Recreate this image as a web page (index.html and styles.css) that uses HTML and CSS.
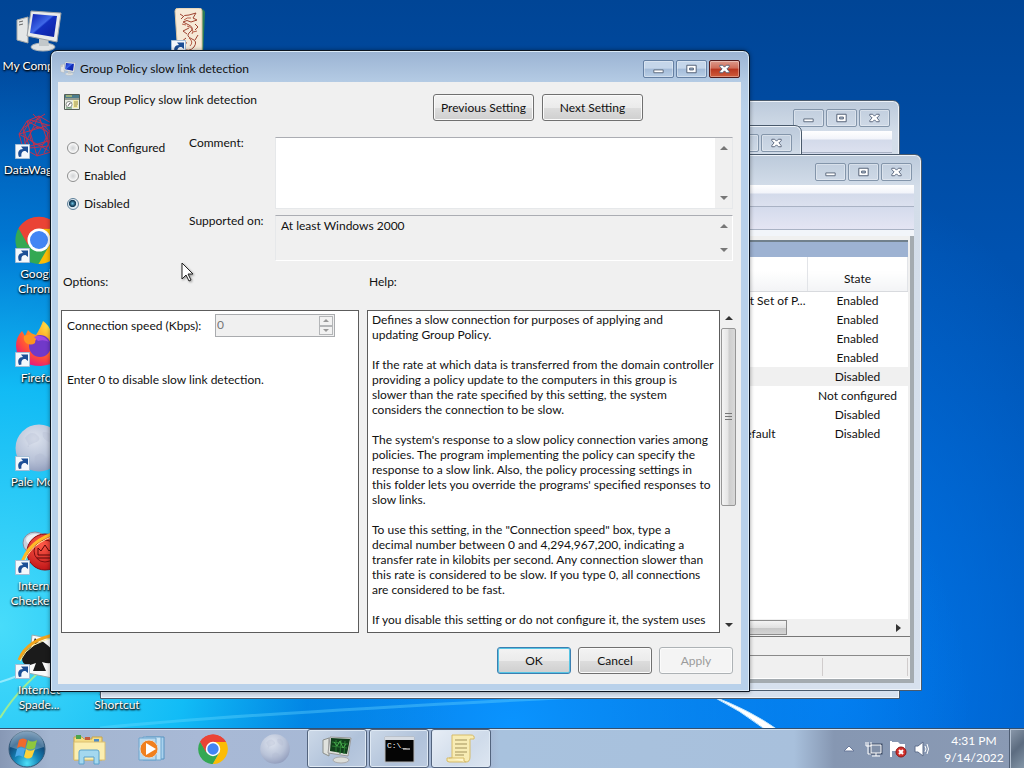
FILE: index.html
```
<!DOCTYPE html>
<html lang="en">
<head>
  <meta charset="UTF-8" />
  <meta name="viewport" content="width=device-width, initial-scale=1.0"/>
  <title>Group Policy slow link detection</title>
  <link rel="stylesheet" href="styles.css">
</head>
<body>
  <!-- Shared drawings -->
  <svg class="defs" width="0" height="0" aria-hidden="true">
    <defs>
      <linearGradient id="screenBlue" x1="0" y1="0" x2="1" y2="1">
        <stop offset="0" stop-color="#0a1fb0"/><stop offset=".45" stop-color="#3f68e8"/><stop offset=".5" stop-color="#1230c0"/><stop offset="1" stop-color="#0c22a0"/>
      </linearGradient>
      <radialGradient id="moonGrad" cx=".4" cy=".3" r=".75">
        <stop offset="0" stop-color="#dde3ee"/><stop offset=".6" stop-color="#b9c3d8"/><stop offset="1" stop-color="#8f9bbb"/>
      </radialGradient>
      <radialGradient id="foxGrad" cx=".75" cy=".1" r="1">
        <stop offset="0" stop-color="#ffe94a"/><stop offset=".4" stop-color="#ff9a1f"/><stop offset=".75" stop-color="#ff4a3c"/><stop offset="1" stop-color="#e31587"/>
      </radialGradient>
      <radialGradient id="orbGrad" cx=".5" cy=".9" r=".95">
        <stop offset="0" stop-color="#4fe0f8"/><stop offset=".35" stop-color="#1585b8"/><stop offset=".65" stop-color="#124c7c"/><stop offset="1" stop-color="#6d93b4"/>
      </radialGradient>
      <radialGradient id="redBall" cx=".4" cy=".3" r=".8">
        <stop offset="0" stop-color="#ff5a48"/><stop offset="1" stop-color="#b80d12"/>
      </radialGradient>
    </defs>
    <symbol id="i-chrome" viewBox="0 0 48 48">
      <path fill="#ea4335" d="M24 24 3.600 12.500A24 24 0 0 1 44.500 12.500H24z"/>
      <path fill="#34a853" d="M3.500 12.200A24 24 0 0 0 24 48L34 29.500 24 24 14 29z"/>
      <path fill="#fbbc05" d="M44.700 12.500A24 24 0 0 1 23.500 48L34.500 29 24 12.500z"/>
      <path fill="#ea4335" d="M3.500 12.300A24 24 0 0 1 44.700 12.700H24L13 29z"/>
      <circle cx="24" cy="24" r="11.500" fill="#fff"/>
      <circle cx="24" cy="24" r="9" fill="#4285f4"/>
    </symbol>
    <symbol id="i-moon" viewBox="0 0 48 48">
      <circle cx="24" cy="24" r="23.500" fill="url(#moonGrad)"/>
      <path d="M10 14q6-8 12-3t-3 8-6 4-3-9M28 8q8-1 9 6t-5 3-4-9M20 32q6-5 10 0t-4 8-6-8" fill="#aab4cc" opacity=".25"/>
    </symbol>
    <symbol id="i-computer" viewBox="0 0 48 48">
      <path d="M2 12 13 9v26L2 32z" fill="#e4e6e6" stroke="#a4a8a8"/>
      <path d="M4 14l4-1M4 17l4-1" stroke="#666"/>
      <ellipse cx="28" cy="39" rx="12" ry="4" fill="#dfe3e4" stroke="#a9b0b4"/>
      <path d="M24 28l9 1 1 9h-10z" fill="#c2c8ca"/>
      <path d="M16 3 46 5 42 34 12 28z" fill="#e9ebeb" stroke="#9ba0a4"/>
      <path d="M18 6 42 8 39 29 15 25z" fill="url(#screenBlue)"/>
    </symbol>
    <symbol id="i-arrow" viewBox="0 0 15 15">
      <path d="M.5.500h14v14H.500z" fill="#f4f8fc" stroke="#a5bed6"/>
      <path d="M4 13C2 8 4 5 8 5L6 2.500H13V9L10.500 7C7 7 6 9 6.500 12.500z" fill="#1c4f96"/>
    </symbol>
    <symbol id="i-min" viewBox="0 0 31 17"><path d="M10.500 9.500h10v3h-10z" fill="#fff" stroke="#59677a"/></symbol>
    <symbol id="i-max" viewBox="0 0 31 17"><path d="M10.500 4.500h10v8h-10zM13.500 7.500v2h4v-2z" fill="#fff" fill-rule="evenodd" stroke="#4d5b72"/></symbol>
    <symbol id="i-close" viewBox="0 0 31 17">
      <path d="M10.500 4.500h3l2 2 2-2h3v1.500l-2.500 2.500 2.500 2.500v1.500h-3l-2-2-2 2h-3V11l2.500-2.500L10.500 6z" fill="#fff" stroke="#56637a"/>
    </symbol>
  </svg>

  <main class="desktop">
    <svg class="wallpaper" viewBox="0 0 1024 728" preserveAspectRatio="none" aria-hidden="true">
      <path d="M0 682Q35 672 55 650" fill="none" stroke="#c9f8ff" stroke-width="2" opacity=".6"/>
      <path d="M0 718Q20 685 60 655" fill="none" stroke="#b4f27e" stroke-width="2" opacity=".8"/>
      <path d="M100 728Q260 712 640 694" fill="none" stroke="#6fdcff" stroke-width="3" opacity=".35"/>
      <path d="M712 696Q750 710 778 730L766 730Q740 710 712 696" fill="#fff" stroke="#bfe6ff"/>
    </svg>

    <div class="icons">
      <a class="icon" href="#">
        <span class="pic"><svg viewBox="0 0 48 48"><use href="#i-computer"/></svg></span>
        <span>My Computer</span>
      </a>
      <a class="icon" href="#">
        <span class="pic"><svg viewBox="0 0 48 48">
          <g fill="none" stroke="#c0304e" stroke-width="1">
            <path d="M24 4 38 12 44 26 36 40 22 44 8 36 4 22 12 9z"/>
            <path d="M24 4 8 36M24 4 36 40M38 12 4 22M38 12 22 44M44 26 12 9M44 26 8 36M12 9 22 44M4 22 36 40"/>
            <circle cx="24" cy="24" r="9"/><path d="M16 8l20 6-3 20-18 2-6-17zM30 2l-22 14 3 22M18 2l20 21-9 18"/>
          </g></svg><svg class="shortcut"><use href="#i-arrow"/></svg></span>
        <span>DataWagon...</span>
      </a>
      <a class="icon" href="#">
        <span class="pic"><svg viewBox="0 0 48 48"><use href="#i-chrome"/></svg><svg class="shortcut"><use href="#i-arrow"/></svg></span>
        <span>Google<br>Chrome</span>
      </a>
      <a class="icon" href="#">
        <span class="pic"><svg viewBox="0 0 48 48">
          <path d="M28 1q6 4 8 11 9 6 10 16 0 16-20 18Q2 46 1 26q0-9 6-15l3 5 3-6q3 4 8 5 5-8 7-14z" fill="url(#foxGrad)"/>
          <circle cx="25" cy="26" r="11" fill="#7139c9"/>
          <path d="M9 16q7-4 16 1-5 1-5 6-4 3-9 0-3-3-2-7z" fill="#ff9420"/>
          <path d="M19 17q9-4 15 5-5-3-11-1z" fill="#a34be0"/>
        </svg><svg class="shortcut"><use href="#i-arrow"/></svg></span>
        <span>Firefox</span>
      </a>
      <a class="icon" href="#">
        <span class="pic"><svg viewBox="0 0 48 48"><use href="#i-moon"/></svg><svg class="shortcut"><use href="#i-arrow"/></svg></span>
        <span>Pale Moon</span>
      </a>
      <a class="icon" href="#">
        <span class="pic"><svg viewBox="0 0 48 48">
          <ellipse cx="20" cy="15" rx="12" ry="11" fill="#c9cfdb" stroke="#858da0"/>
          <ellipse cx="20" cy="12" rx="9" ry="6" fill="#eef1f5"/>
          <circle cx="30" cy="24" r="18" fill="url(#redBall)" stroke="#8d0a0e"/>
          <circle cx="30" cy="23" r="11" fill="none" stroke="#7c0d10"/>
          <path d="M23 27v-7l3 3 4-6 4 6 3-3v7zM22 30h16" fill="none" stroke="#5a0809"/>
          <path d="M6 38Q12 12 46 3" fill="none" stroke="#ffba27" stroke-width="3"/>
          <path d="M8 38Q14 14 46 6" fill="none" stroke="#fff0a0"/>
        </svg><svg class="shortcut"><use href="#i-arrow"/></svg></span>
        <span>Internet<br>Checkers...</span>
      </a>
      <a class="icon" href="#">
        <span class="pic"><svg viewBox="0 0 48 48">
          <path d="M17 3l26 5-6 38-24-5z" fill="#fafafa" stroke="#9aa"/>
          <path d="M20 6l3 4-2 2-3-1z" fill="#111"/>
          <path d="M27 9Q8 18 7 26q0 8 8 7l6-2-3 8h13l-4-9q13 4 14-5 0-6-14-16z" fill="#1b1b1b"/>
          <path d="M4 28Q12 7 44 2" fill="none" stroke="#f2a51c" stroke-width="3"/>
          <path d="M5 29Q14 9 44 5" fill="none" stroke="#fff0a0"/>
        </svg><svg class="shortcut"><use href="#i-arrow"/></svg></span>
        <span>Internet<br>Spade...</span>
      </a>
      <a class="icon second" href="#">
        <span class="pic"></span>
        <span>Apps -<br>Shortcut</span>
      </a>
      <a class="icon third" href="#">
        <span class="pic"><svg viewBox="0 0 48 48">
          <path d="M30 1q3 0 4 3l-2 44H9L5 3q0-2 3-2z" fill="#2d7d54"/>
          <path d="M8 0h20q3 0 3 3v45H7L4 3q0-3 4-3z" fill="#f6ead8" stroke="#d8c3a0"/>
          <path d="M10 11q3-5 8-4l7-2-3 5 4 2-6 2q-4-3-8 0l6 3q6 3 1 7t2 7q6 2 2 8-5 6-12 1M12 8l-3-2M24 16l3 3-3 3M18 20l-6 3 4 3M15 30l-5 4 6 1M27 27l-3 5" fill="none" stroke="#9e4432"/>
          <path d="M13 12q3-3 7-2M16 18q8 2 5 8M18 30q5 4 1 8M11 16l4 1M22 24l4-1M12 38l3-2" fill="none" stroke="#b5604a"/>
        </svg><svg class="shortcut"><use href="#i-arrow"/></svg></span>
      </a>
    </div>

    <!-- Background windows -->
    <section class="window back win-a" aria-label="Background window">
      <header class="titlebar">
        <div class="caption">
          <button aria-label="Minimize"><svg><use href="#i-min"/></svg></button>
          <button aria-label="Maximize"><svg><use href="#i-max"/></svg></button>
          <button aria-label="Close"><svg><use href="#i-close"/></svg></button>
        </div>
      </header>
      <div class="bars"><div class="menubar"></div><div class="toolbar"></div></div>
    </section>

    <section class="window back win-b" aria-label="Background window">
      <header class="titlebar">
        <div class="caption">
          <button aria-label="Minimize"><svg><use href="#i-min"/></svg></button>
          <button aria-label="Maximize"><svg><use href="#i-max"/></svg></button>
          <button aria-label="Close"><svg><use href="#i-close"/></svg></button>
        </div>
      </header>
    </section>

    <section class="window back win-c" aria-label="Policy list">
      <header class="titlebar">
        <div class="caption">
          <button aria-label="Minimize"><svg><use href="#i-min"/></svg></button>
          <button aria-label="Maximize"><svg><use href="#i-max"/></svg></button>
          <button aria-label="Close"><svg><use href="#i-close"/></svg></button>
        </div>
      </header>
      <div class="bars"><div class="menubar"></div><div class="toolbar"></div></div>
      <div class="console">
        <div class="bluebar"></div>
        <div class="list">
          <table>
            <thead><tr><th></th><th class="state">State</th></tr></thead>
            <tbody>
              <tr><td>Resultant Set of P...</td><td class="state">Enabled</td></tr>
              <tr><td></td><td class="state">Enabled</td></tr>
              <tr><td></td><td class="state">Enabled</td></tr>
              <tr><td></td><td class="state">Enabled</td></tr>
              <tr class="selected"><td></td><td class="state">Disabled</td></tr>
              <tr><td></td><td class="state">Not configured</td></tr>
              <tr><td></td><td class="state">Disabled</td></tr>
              <tr><td class="short">default</td><td class="state">Disabled</td></tr>
            </tbody>
          </table>
        </div>
        <div class="hscroll"><div class="hthumb"></div><svg viewBox="0 0 5 8"><path d="M0 0l5 4-5 4z" fill="#333"/></svg></div>
        <div class="tabs"></div>
        <div class="statusbar"><span></span><span></span></div>
      </div>
    </section>

    <!-- Policy dialog -->
    <section class="window dialog" aria-label="Group Policy slow link detection">
      <header class="titlebar">
        <svg class="title-icon" viewBox="0 0 48 48"><use href="#i-computer"/></svg>
        <h1>Group Policy slow link detection</h1>
        <div class="caption">
          <button aria-label="Minimize"><svg><use href="#i-min"/></svg></button>
          <button aria-label="Maximize"><svg><use href="#i-max"/></svg></button>
          <button class="close" aria-label="Close"><svg><use href="#i-close"/></svg></button>
        </div>
      </header>
      <form class="client" onsubmit="return false">
        <div class="heading">
          <svg class="policy-icon" viewBox="0 0 16 16">
            <path d="M.5.500h15v15H.500z" fill="#e9ece2" stroke="#566058"/>
            <path d="M1 1h14v3H1z" fill="#4c7c8c"/><path d="M2 2h6" stroke="#e8e36a"/><path d="M1 5h14" stroke="#3f4a40"/>
            <circle cx="5" cy="10.500" r="3" fill="#fff" stroke="#8a9088"/><path d="M5 10.500l2-2M4 12l2-3" stroke="#777"/>
            <path d="M9 6h5v8H9z" fill="#f5eda8"/><path d="M10 8h4M10 10h4M10 12h3" stroke="#9a8f4a"/><path d="M2 14h6" stroke="#4d8a5c"/>
          </svg>
          <h2>Group Policy slow link detection</h2>
          <button class="btn wide" type="button">Previous Setting</button>
          <button class="btn wide" type="button">Next Setting</button>
        </div>

        <div class="settings">
          <div class="radios">
            <label><input type="radio" name="state"> Not Configured</label>
            <label><input type="radio" name="state"> Enabled</label>
            <label><input type="radio" name="state" checked> Disabled</label>
          </div>
          <div class="fields">
            <label for="comment">Comment:</label>
            <div class="box comment">
              <textarea id="comment"></textarea>
              <div class="vscroll"><i class="up"></i><i class="down"></i></div>
            </div>
            <label for="supported">Supported on:</label>
            <div class="box supported">
              <textarea id="supported" readonly>At least Windows 2000</textarea>
              <div class="vscroll"><i class="up"></i><i class="down"></i></div>
            </div>
          </div>
        </div>

        <div class="panes">
          <section class="pane options">
            <h3>Options:</h3>
            <div class="frame">
              <div class="speed">
                <label for="speed">Connection speed (Kbps):</label>
                <div class="spinner">
                  <input id="speed" type="text" value="0" disabled>
                  <div class="spin">
                    <button type="button" disabled aria-label="Increase"><i class="up"></i></button>
                    <button type="button" disabled aria-label="Decrease"><i class="down"></i></button>
                  </div>
                </div>
              </div>
              <p>Enter 0 to disable slow link detection.</p>
            </div>
          </section>
          <section class="pane help">
            <h3>Help:</h3>
            <div class="help-row">
              <div class="frame text">
                <p>Defines a slow connection for purposes of applying and<br>updating Group Policy.</p>
                <p>If the rate at which data is transferred from the domain controller<br>providing a policy update to the computers in this group is<br>slower than the rate specified by this setting, the system<br>considers the connection to be slow.</p>
                <p>The system's response to a slow policy connection varies among<br>policies. The program implementing the policy can specify the<br>response to a slow link. Also, the policy processing settings in<br>this folder lets you override the programs' specified responses to<br>slow links.</p>
                <p>To use this setting, in the "Connection speed" box, type a<br>decimal number between 0 and 4,294,967,200, indicating a<br>transfer rate in kilobits per second. Any connection slower than<br>this rate is considered to be slow. If you type 0, all connections<br>are considered to be fast.</p>
                <p>If you disable this setting or do not configure it, the system uses</p>
              </div>
              <div class="vscroll long"><i class="up"></i><div class="thumb"></div><i class="down"></i></div>
            </div>
          </section>
        </div>

        <footer class="actions">
          <button class="btn default" type="submit">OK</button>
          <button class="btn" type="button">Cancel</button>
          <button class="btn" type="button" disabled>Apply</button>
        </footer>
      </form>
    </section>

    <svg class="pointer" viewBox="0 0 13 20" aria-hidden="true">
      <path d="M1 1v16l4-4 3 6 2-1-3-6h5z" fill="#fff" stroke="#222"/>
    </svg>
  </main>

  <nav class="taskbar">
    <button class="start" aria-label="Start">
      <svg viewBox="0 0 38 38">
        <circle cx="19" cy="19" r="18" fill="url(#orbGrad)" stroke="#355a78"/>
        <path d="M2 17A17 17 0 0 1 36 17Q19 24 2 17z" fill="#fff" opacity=".25"/>
        <path d="M11 10q4-3 8 0l-2 8q-4-3-8 0z" fill="#f06a2c"/>
        <path d="M20 10q4 3 9 0l-2 8q-5 3-9 0z" fill="#8fc73e"/>
        <path d="M9 19q4-3 8 0l-2 8q-4-3-8 0z" fill="#4aa8e8"/>
        <path d="M18 19q4 3 9 0l-3 8q-4 3-8 0z" fill="#fdd23a"/>
      </svg>
    </button>
    <button class="task" aria-label="Windows Explorer">
      <svg viewBox="0 0 34 34">
        <path d="M2 5h8l2 2h8V5h10v23H2z" fill="#f3dc86" stroke="#c9a548"/>
        <path d="M4 3h5v4H4z" fill="#4aa54c"/><path d="M13 5h5v3h-5z" fill="#c45a3c"/><path d="M22 7h5v3h-5z" fill="#4c8cc8"/>
        <path d="M2 10h31v18H2z" fill="#fbeeb0" stroke="#dcc070"/>
        <path d="M7 32V20q0-2 2-2h16q2 0 2 2v12h-5v-7H12v7z" fill="#a4d8ef" stroke="#5aa2cc"/>
      </svg>
    </button>
    <button class="task" aria-label="Windows Media Player">
      <svg viewBox="0 0 34 34">
        <path d="M12 5h18v22H12z" fill="#a9d2ee" stroke="#5692c0"/><path d="M9 5h18v23H9z" fill="#cbe5f5" stroke="#6da4cd"/><path d="M5 6h17v22H5z" fill="#b7daf0" stroke="#6da4cd"/>
        <circle cx="15" cy="17" r="9" fill="#f0801f" stroke="#dcdcdc"/>
        <path d="M12 11l10 6-10 6z" fill="#fff"/>
      </svg>
    </button>
    <button class="task" aria-label="Google Chrome"><svg viewBox="-3 -3 54 54"><use href="#i-chrome" width="48" height="48"/></svg></button>
    <button class="task" aria-label="Pale Moon"><svg viewBox="-3 -3 54 54"><use href="#i-moon" width="48" height="48"/></svg></button>
    <button class="task open" aria-label="System">
      <svg viewBox="0 0 34 34">
        <path d="M3 8l6-2v18l-6-3z" fill="#e0e2de" stroke="#8b8f8b"/>
        <path d="M10 5l21 1-3 18-20-3z" fill="#dfe0dc" stroke="#999"/>
        <path d="M11 6l19 1-3 15-17-3z" fill="#12401c"/>
        <path d="M12 10l16 2M12 14l15 2M16 8v12M21 8l-1 14M25 9l-1 13" stroke="#2c8036"/>
        <path d="M14 10l3 4 3-5 3 7 3-4" fill="none" stroke="#4bb04f"/>
        <ellipse cx="21" cy="28" rx="8" ry="3" fill="#dcdeda" stroke="#aaa"/>
      </svg>
    </button>
    <button class="task open" aria-label="Command Prompt">
      <svg viewBox="0 0 34 34">
        <path d="M3 5h29v25H3z" fill="#050505" stroke="#b8b8b8"/><path d="M3 5h29v3H3z" fill="#d6dbe2"/>
        <text x="5" y="16" font-family="Liberation Mono, monospace" font-size="8" fill="#fff">C:\_</text>
        <path d="M21 17h7" stroke="#fff"/>
      </svg>
    </button>
    <button class="task open bright" aria-label="Local Group Policy Editor">
      <svg viewBox="0 0 34 34">
        <path d="M8 3h19q4 0 3 4h-4v18q0 5-4 5H5q-3 0-2-4h5z" fill="#f8ecb4" stroke="#d6bb68"/>
        <path d="M5 26h15q-1 4 2 4" fill="#fff6cc" stroke="#d6bb68"/>
        <path d="M11 8h12M11 12h12M11 16h12M11 20h12M11 23h9" stroke="#a3935c"/>
      </svg>
    </button>

    <div class="tray">
      <svg width="12" height="8" viewBox="0 0 12 8"><path d="M6 1l5 5H1z" fill="#fff" stroke="#69799a"/></svg>
      <svg width="18" height="18" viewBox="0 0 18 18">
        <path d="M6 5h10v8H6z" fill="#7787a0" stroke="#3f4d66" stroke-width="3"/><path d="M6 5h10v8H6z" fill="#8190a8" stroke="#fff"/>
        <path d="M7 16h8M11 13v3" stroke="#fff"/>
        <path d="M1 2v4h5V2M3 2v4M3 6v8h3" fill="none" stroke="#fff"/>
      </svg>
      <svg width="18" height="18" viewBox="0 0 18 18">
        <path d="M2 1v16" stroke="#fff" stroke-width="2"/><path d="M3 2h6l2 2h5v8h-5l-2-1H3z" fill="#fff"/>
        <circle cx="12" cy="12" r="5" fill="#d3302c" stroke="#8d1613"/><path d="M10 10l4 4M14 10l-4 4" stroke="#fff" stroke-width="2"/>
      </svg>
      <svg width="18" height="18" viewBox="0 0 18 18">
        <path d="M2 6h3l5-4v14l-5-4H2z" fill="#fff" stroke="#5f6f8c"/>
        <path d="M12 6q2 3 0 6M14 4q3 5 0 10" fill="none" stroke="#fff"/>
      </svg>
    </div>
    <div class="clock"><span>4:31 PM</span><span>9/14/2022</span></div>
    <button class="show-desktop" aria-label="Show desktop"></button>
  </nav>
</body>
</html>
```

FILE: styles.css
```
* {
  box-sizing: border-box;
}
body {
  margin: 0;
  height: 100vh;
  display: flex;
  flex-direction: column;
  overflow: hidden;
  font-family: Lato, "Open Sans", sans-serif;
  font-size: 12px;
  line-height: 15px;
  color: #111;
}
h1, h2, h3, p {
  margin: 0;
  font-size: 12px;
  font-weight: normal;
}
button, input, textarea {
  font: inherit;
  color: inherit;
  margin: 0;
  padding: 0;
}
svg {
  display: block;
}
.defs {
  position: absolute;
}

/* Desktop */
.desktop {
  position: relative;
  flex: 1;
  overflow: hidden;
  background:
    radial-gradient(ellipse 45% 78% at 0% 86%, #48dcfa 0%, rgba(18, 192, 248, 0.95) 42%, rgba(0, 140, 230, 0.65) 68%, rgba(0, 100, 210, 0) 100%),
    radial-gradient(ellipse 45% 60% at 50% 100%, #0a94ff 0%, rgba(0, 112, 224, 0) 100%),
    radial-gradient(ellipse 30% 70% at 82% 95%, #0076ea 0%, rgba(0, 98, 210, 0) 100%),
    linear-gradient(180deg, #004596 0%, #0052b0 35%, #005cc4 100%);
}
.wallpaper {
  position: absolute;
  width: 100%;
  height: 100%;
}
.icons {
  position: absolute;
  top: 8px;
  left: 0;
  display: grid;
  grid-template-columns: repeat(3, 78px);
  grid-template-rows: repeat(7, 104px);
  grid-auto-flow: column;
}
.icon {
  display: flex;
  flex-direction: column;
  align-items: center;
  gap: 2px;
  color: #fff;
  text-align: center;
  text-decoration: none;
  white-space: nowrap;
  text-shadow: 1px 1px 2px #000, 0 1px 2px #000;
}
.icon.second {
  grid-area: 7 / 2;
}
.icon.third {
  grid-area: 1 / 3;
}
.pic {
  position: relative;
  width: 48px;
  height: 48px;
}
.pic .shortcut {
  position: absolute;
  left: 0;
  bottom: 1px;
  width: 15px;
  height: 15px;
}

/* Windows */
.window {
  position: absolute;
  display: flex;
  flex-direction: column;
  border: 1px solid #1c2a3a;
  border-radius: 7px 7px 0 0;
  padding: 0 7px 7px;
}
.titlebar {
  display: flex;
  align-items: flex-start;
  height: 30px;
  flex: none;
}
.caption {
  display: flex;
  gap: 2px;
  margin: 8px 2px 0 auto;
}
.caption button {
  width: 31px;
  height: 18px;
  border: 1px solid #8395aa;
  border-radius: 2px;
  background: transparent;
  box-shadow: inset 0 0 0 1px rgba(255, 255, 255, 0.35);
}
.caption svg {
  width: 29px;
  height: 16px;
}
.back {
  border-color: #4a5a6c;
  box-shadow: inset 0 0 0 1px #eef3f9;
  background: linear-gradient(180deg, #bccadb 0, #d3dde9 32px, #d7e1ee 100%);
}
.win-a {
  left: 100px;
  right: 124px;
  top: 100px;
  bottom: 29px;
}
.win-b {
  left: 120px;
  right: 222px;
  top: 125px;
  bottom: 60px;
}
.win-c {
  left: 420px;
  right: 102px;
  top: 154px;
  bottom: 37px;
}
.menubar {
  height: 22px;
  background: linear-gradient(180deg, #fff 0, #f2f4fa 8px, #d3daea 9px, #dce1ef 100%);
  border-bottom: 1px solid #a9b2c4;
}
.toolbar {
  height: 23px;
  background: linear-gradient(180deg, #d4dbec, #e4e5f3);
  border-bottom: 1px solid #a9b2c4;
}
.bars {
  background: #f2f5fa;
  padding-bottom: 6px;
}
.console {
  flex: 1;
  display: flex;
  flex-direction: column;
  padding-top: 4px;
  background: #f0f0f0;
  border-right: 4px solid #a4abb0;
  border-bottom: 4px solid #a4abb0;
}
.bluebar {
  height: 17px;
  margin-right: 2px;
  background: #9db2d2;
  border-top: 2px solid #71808c;
}
.list {
  flex: 1;
  margin-right: 2px;
  background: #fff;
}
table {
  width: 100%;
  border-collapse: collapse;
}
th, td {
  height: 19px;
  padding: 0 2px;
  font-weight: normal;
  text-align: right;
}
th {
  height: 34px;
  padding-top: 10px;
  background: linear-gradient(180deg, #fff 40%, #f3f4f6);
  border-bottom: 1px solid #d8dade;
  border-right: 1px solid #e2e4e8;
}
td.short {
  padding-right: 32px;
}
th.state, td.state {
  width: 100px;
  padding-left: 0;
  padding-right: 0;
  text-align: center;
}
tr.selected {
  background: #f0f0f0;
}
.hscroll {
  display: flex;
  align-items: center;
  justify-content: space-between;
  height: 18px;
  padding-right: 9px;
  border-bottom: 1px solid #777;
}
.hthumb {
  width: 76%;
  height: 15px;
  border: 1px solid #8c8c8c;
  background: linear-gradient(180deg, #f4f4f4 0, #e2e2e2 50%, #c6c6c6 51%, #d4d4d4);
}
.hscroll svg {
  width: 5px;
  height: 8px;
}
.tabs {
  height: 19px;
  border-bottom: 1px solid #8a8a8a;
}
.statusbar {
  display: flex;
  justify-content: flex-end;
  height: 23px;
  padding: 2px 2px 2px 0;
  border-bottom: 1px solid #fff;
}
.statusbar span {
  width: 85px;
  border-right: 1px solid #d0cccc;
}

/* Dialog */
.dialog {
  left: 50px;
  right: 274px;
  top: 50px;
  bottom: 36px;
  border-color: #0b1420;
  padding: 1px 8px 7px 7px;
  box-shadow: inset 0 0 0 1px #dcebf8, 0 0 4px rgba(0, 0, 0, 0.4);
  background: linear-gradient(180deg, #9bb3d3 0, #b4cbe4 31px, #b9d1ea 60px, #b9d1ea 100%);
}
.title-icon {
  width: 16px;
  height: 16px;
  margin: 9px 4px 0 2px;
}
.dialog h1 {
  padding-top: 9px;
}
.dialog .caption {
  margin-right: 1px;
}
.dialog .caption button {
  border-color: #6580a3;
  background: linear-gradient(180deg, #c5d6ea 45%, #a3bbd8 50%, #b9cfe6);
}
.dialog .caption button.close {
  border-color: #4f1a1c;
  background: linear-gradient(180deg, #dc9a8c 0, #cf6c58 45%, #b83620 50%, #cf5c3c);
}
.client {
  flex: 1;
  min-height: 0;
  display: flex;
  flex-direction: column;
  background: #f0f0f0;
}
.heading {
  display: flex;
  align-items: flex-start;
  gap: 8px;
  height: 52px;
  padding: 12px 98px 0 6px;
}
.policy-icon {
  width: 16px;
  height: 16px;
}
.heading h2 {
  flex: 1;
  line-height: 12px;
}
.btn {
  width: 74px;
  height: 27px;
  border: 1px solid #707070;
  border-radius: 3px;
  background: linear-gradient(180deg, #f3f3f3 0, #ebebeb 50%, #dddddd 51%, #cfcfcf 100%);
  box-shadow: inset 0 0 0 1px #fbfbfb;
  white-space: nowrap;
}
.btn.wide {
  width: 101px;
}
.btn.default {
  border-color: #3c7fb1;
  box-shadow: inset 0 0 0 1px #57c5e4;
}
.btn:disabled {
  border-color: #adb2b5;
  background: #f4f4f4;
  color: #9b9b9b;
}
.settings {
  display: flex;
}
.radios {
  flex: none;
  width: 131px;
  padding-left: 9px;
}
.radios label {
  display: flex;
  align-items: center;
  gap: 5px;
  height: 28px;
  line-height: 14px;
  white-space: nowrap;
}
.radios input {
  appearance: none;
  width: 12px;
  height: 12px;
  border: 1px solid #8e8f8f;
  border-radius: 50%;
  background: radial-gradient(circle, #d0d2d4 0, #e8e9ea 40%, #f6f6f6 60%);
}
.radios input:checked {
  border-color: #5d7f98;
  background: radial-gradient(circle at 45% 45%, #6cc0e4 0, #15405c 35%, #15405c 42%, #dfeaf2 52%);
}
.fields {
  flex: 1;
  display: grid;
  grid-template-columns: 86px 1fr;
  row-gap: 6px;
  padding: 3px 8px 0 0;
}
.fields label {
  line-height: 12px;
}
.fields .box {
  display: flex;
  border: 1px solid #e6e8ea;
  border-top-color: #abadb3;
  background: #fff;
}
.comment {
  height: 72px;
}
.fields .supported {
  height: 46px;
  background: #f0f0f0;
  border-right-color: #fff;
  border-bottom-color: #fff;
}
textarea {
  flex: 1;
  min-width: 0;
  padding: 2px 5px;
  border: 0;
  outline: 0;
  background: transparent;
  resize: none;
  overflow: hidden;
}
.vscroll {
  width: 17px;
  display: flex;
  flex-direction: column;
  justify-content: space-between;
  align-items: center;
  padding: 8px 0;
  background: #f0f0f0;
}
.up, .down {
  flex: none;
  border: 4px solid transparent;
}
.up {
  border-top: 0;
  border-bottom: 4px solid #777;
}
.down {
  border-bottom: 0;
  border-top: 4px solid #777;
}
.panes {
  flex: 1;
  min-height: 0;
  display: flex;
  gap: 8px;
  padding: 13px 4px 0 3px;
}
.pane {
  display: flex;
  flex-direction: column;
  min-width: 0;
}
.pane h3 {
  height: 36px;
  padding-left: 2px;
}
.options {
  flex: 298;
}
.help {
  flex: 370;
}
.frame {
  flex: 1;
  min-height: 0;
  border: 1px solid #5c5c5c;
  background: #fff;
  overflow: hidden;
  white-space: nowrap;
}
.options .frame {
  padding: 3px 5px;
}
.speed {
  display: flex;
  align-items: center;
  margin-bottom: 35px;
}
.speed label {
  width: 148px;
}
.spinner {
  width: 120px;
  height: 23px;
  display: flex;
  padding: 1px;
  border: 1px solid #a9abae;
  background: #f0f0f0;
}
.spinner input {
  flex: 1;
  min-width: 0;
  height: 17px;
  border: 0;
  background: transparent;
  color: #777;
}
.spin {
  display: flex;
  flex-direction: column;
  width: 14px;
}
.spin button {
  flex: 1;
  display: flex;
  align-items: center;
  justify-content: center;
  border: 1px solid #b4b6b8;
  background: #f2f2f2;
}
.spin i {
  border-width: 3px;
}
.spin .up {
  border-top-width: 0;
  border-bottom-color: #999;
}
.spin .down {
  border-bottom-width: 0;
  border-top-color: #999;
}
.help-row {
  flex: 1;
  min-height: 0;
  display: flex;
}
.text {
  padding: 1px 0 0 4px;
}
.text p {
  margin-bottom: 15px;
}
.long {
  padding: 6px 0;
}
.long .up {
  border-bottom-color: #333;
}
.long .down {
  border-top-color: #333;
}
.thumb {
  width: 15px;
  height: 178px;
  margin: 8px 0 auto;
  border: 1px solid #969696;
  border-radius: 2px;
  background:
    repeating-linear-gradient(180deg, #777 0 1px, transparent 1px 3px) center / 7px 8px no-repeat,
    linear-gradient(90deg, #f4f4f4 0, #e4e4e4 48%, #cdcdcd 52%, #d8d8d8 100%);
}
.actions {
  display: flex;
  justify-content: flex-end;
  gap: 7px;
  padding: 14px 8px 10px;
}
.pointer {
  position: absolute;
  left: 181px;
  top: 262px;
  width: 13px;
  height: 20px;
  filter: drop-shadow(1px 1px 1px rgba(0, 0, 0, 0.4));
}

/* Taskbar */
.taskbar {
  display: flex;
  align-items: stretch;
  gap: 2px;
  height: 40px;
  border-top: 1px solid #34506f;
  box-shadow: inset 0 1px 0 #d3e3f3;
  background:
    linear-gradient(90deg, #8798b5 0, #a3b5d0 50px, #a8b9d6 200px, #a5b8d4 490px, #a8c2de 500px, #a8c0dc calc(100% - 230px), #8697b2 calc(100% - 190px), #8a9ab4 100%);
}
.taskbar button {
  border: 0;
  background: transparent;
}
.start {
  width: 57px;
}
.start svg {
  width: 38px;
  height: 38px;
  margin-left: 8px;
}
.task {
  width: 60px;
  display: flex;
  align-items: center;
  justify-content: center;
}
.task svg {
  width: 34px;
  height: 34px;
}
.taskbar .open {
  border: 1px solid #53647e;
  border-radius: 3px;
  box-shadow: inset 0 0 0 1px #dfe9f4;
  background: linear-gradient(135deg, #cdd9e8, #b0c2da 60%, #bccbe0);
}
.taskbar .bright {
  background: linear-gradient(135deg, #e8eef6, #cfdbea 60%, #dde6f1);
}
.tray {
  margin-left: auto;
  display: flex;
  align-items: center;
  gap: 6px;
}
.tray svg:first-child {
  margin-right: 4px;
}
.clock {
  display: flex;
  flex-direction: column;
  justify-content: center;
  gap: 2px;
  width: 74px;
  padding-left: 8px;
  color: #fff;
  text-align: center;
}
.taskbar .show-desktop {
  width: 15px;
  border-left: 1px solid #4e5d73;
  box-shadow: inset 1px 1px 0 #b6c3d3;
  background: linear-gradient(135deg, #8c9aac, #5c6c80 50%, #8496a8);
}
```
